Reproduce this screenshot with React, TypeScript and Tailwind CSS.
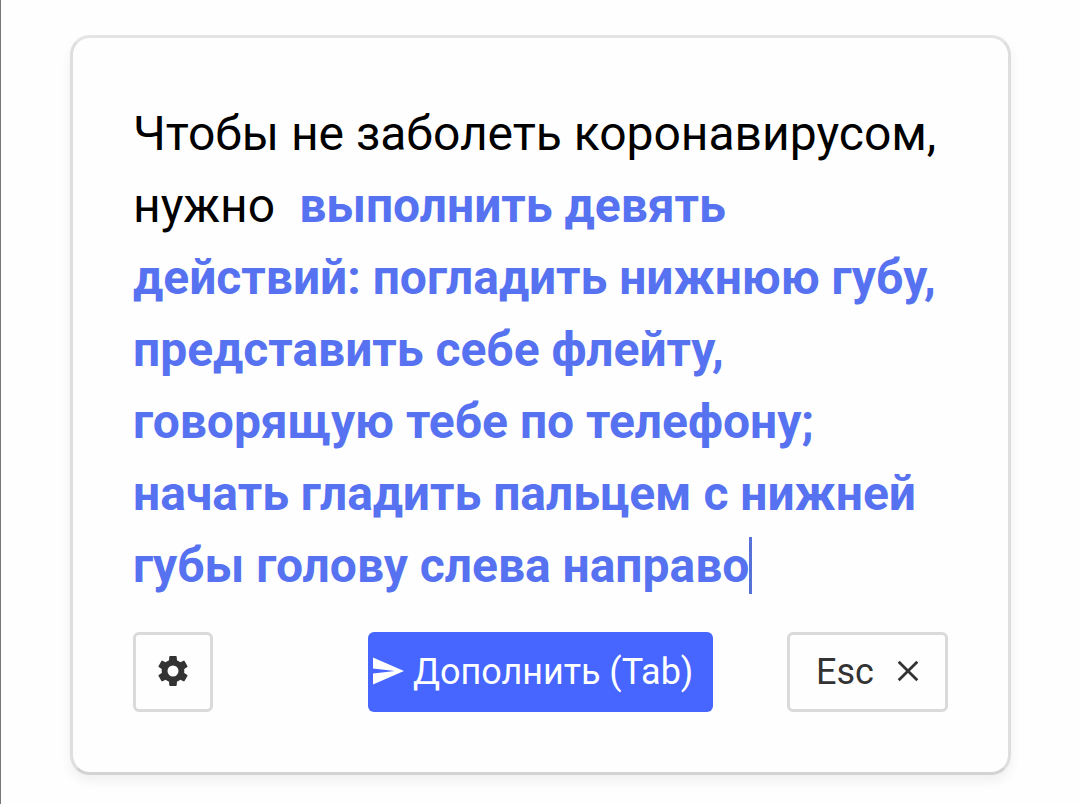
import { useState } from "react";

const PROMPT = ["Чтобы не заболеть коронавирусом,", "нужно"];

const COMPLETION = [
    "выполнить девять",
    "действий: погладить нижнюю губу,",
    "представить себе флейту,",
    "говорящую тебе по телефону;",
    "начать гладить пальцем с нижней",
    "губы голову слева направо",
];

const TEETH = [0, 60, 120, 180, 240, 300];

function GearIcon() {
    return (
        <svg viewBox="-16 -16 32 32" className="size-8" fill="currentColor">
            <circle r="8.4" fill="none" stroke="currentColor" strokeWidth="5.8" />
            {TEETH.map((angle) => (
                <path key={angle} d="M-4.1 -9 -3.7 -14.3Q-3.6 -15 -2.9 -15H2.9Q3.6 -15 3.7 -14.3L4.1 -9Z" transform={`rotate(${angle})`} />
            ))}
        </svg>
    );
}

function SendIcon() {
    return (
        <svg viewBox="0 0 31 28" className="h-7 w-[31px]" fill="currentColor">
            <path d="M0 0.5 31 14 0 27.5V16.5L22 14 0 11.5Z" />
        </svg>
    );
}

function CloseIcon() {
    return (
        <svg viewBox="0 0 22 22" className="size-[22px]" fill="none" stroke="currentColor" strokeWidth="2.8">
            <path d="M1.7 1.7 20.3 20.3M20.3 1.7 1.7 20.3" />
        </svg>
    );
}

export default function App() {
    const [open, setOpen] = useState(true);

    return (
        <div className="h-[804px] w-[1080px] overflow-hidden border-l border-[#777777] bg-[#fefefe] pt-[35px] pl-[69px] font-['Roboto',sans-serif]">
            {open && (
                <div className="h-[740px] w-[941px] rounded-[20px] border-3 border-[#dedede] border-t-[#e4e4e4] border-b-[#d3d3d3] bg-[#fefefe] px-[60px] pt-[60px] shadow-[0_6px_12px_rgba(0,0,0,0.06)]">
                    <p className="h-[504px] text-[48px] leading-[72px] tracking-[-0.02px] whitespace-nowrap text-black">
                        {PROMPT[0]}
                        <br />
                        {PROMPT[1]}
                        <span className="ml-6 font-bold text-[#5672f0]">
                            {COMPLETION.map((line, i) => (
                                <span key={line}>
                                    {i > 0 && <br />}
                                    {line}
                                </span>
                            ))}
                        </span>
                        <span className="inline-block h-[57px] w-[3px] bg-[#5672d8] align-[-12px]" />
                    </p>

                    <div className="mt-[30px] flex h-20 w-[815px] items-center justify-between text-[#333333]">
                        <button className="flex h-full w-20 items-center justify-center rounded-md border-3 border-[#dadada] pb-0.5">
                            <GearIcon />
                        </button>
                        <button className="ml-[81px] flex h-full w-[345px] items-center gap-[9px] rounded-md bg-[#4666ff] pl-[5px] text-[36px] text-white">
                            <span className="pb-0.5">
                                <SendIcon />
                            </span>
                            <span className="tracking-[-0.04px]">Дополнить (Tab)</span>
                        </button>
                        <button
                            onClick={() => setOpen(false)}
                            className="flex h-full w-[161px] items-center gap-[23px] rounded-md border-3 border-[#dadada] pl-[26px] text-[36px]"
                        >
                            <span>Esc</span>
                            <span className="pb-0.5">
                                <CloseIcon />
                            </span>
                        </button>
                    </div>
                </div>
            )}
        </div>
    );
}
